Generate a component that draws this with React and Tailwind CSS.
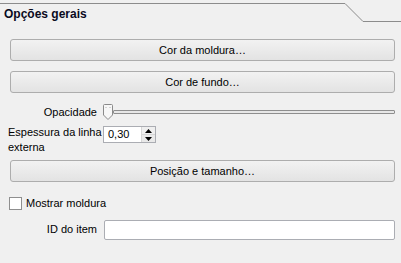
import React from "react";

function Btn({ children, className = "" }) {
  return (
    <div
      className={
        "flex h-[22px] items-center justify-center rounded-[3px] border border-[#adadad] bg-gradient-to-b from-[#f2f2f2] to-[#e3e3e3] text-[11px] text-black " +
        className
      }
    >
      {children}
    </div>
  );
}

export default function App() {
  return (
    <div
      className="relative h-[263px] w-[401px] overflow-hidden bg-[#f0f0f0] text-black"
      style={{ fontFamily: '"Liberation Sans", Arial, sans-serif' }}
    >
      <div className="relative h-[24px]">
        <svg className="absolute left-0 top-0" width="401" height="24">
          <path d="M0 3.5 H345 L363 21.5 H401" fill="none" stroke="#8c8c8c" strokeWidth="1" />
        </svg>
        <div className="relative pl-[4px] pt-[7px] text-[12px] font-bold leading-[14px] text-[#0a0a1e]">
          Opções gerais
        </div>
      </div>

      <div className="flex flex-col px-[10px] pr-[6px]">
        <Btn className="mt-[15px]">Cor da moldura…</Btn>
        <Btn className="mt-[10px]">Cor de fundo…</Btn>

        <div className="mt-[10px] flex h-[18px] items-center">
          <div className="w-[87px] text-right text-[11px]">Opacidade</div>
          <div className="ml-[6px] flex flex-1 items-center">
            <svg width="10" height="16" viewBox="0 0 10 16" className="shrink-0">
              <path
                d="M1.5 0.5 H8.5 Q9.5 0.5 9.5 1.5 V11 L5 15.5 L0.5 11 V1.5 Q0.5 0.5 1.5 0.5 Z"
                fill="#f7f7f7"
                stroke="#8a8a8a"
              />
              <path d="M3 3 V4 M7 3 V4" stroke="#b0b0b0" />
            </svg>
            <div className="h-[4px] flex-1 rounded-[1px] border border-[#8e8e8e] bg-[#e7e7e7]" />
          </div>
        </div>

        <div className="mt-[4px] flex items-start">
          <div className="ml-[-2px] w-[95px] text-[11px] leading-[15px]">
            Espessura da linha externa
          </div>
          <div className="mt-[1px] flex h-[17px] w-[53px] border border-[#abadb3] bg-white">
            <div className="flex flex-1 items-center pl-[4px] text-[11px]">0,30</div>
            <div className="flex w-[14px] flex-col border-l border-[#d6d6d6]">
              <div className="flex flex-1 items-center justify-center border-b border-[#d6d6d6] bg-[#efefef]">
                <svg width="7" height="4" viewBox="0 0 7 4">
                  <path d="M0 4 L3.5 0 L7 4 Z" fill="#000" />
                </svg>
              </div>
              <div className="flex flex-1 items-center justify-center bg-[#e9e9e9]">
                <svg width="7" height="4" viewBox="0 0 7 4">
                  <path d="M0 0 L3.5 4 L7 0 Z" fill="#000" />
                </svg>
              </div>
            </div>
          </div>
        </div>

        <Btn className="mt-[5px]">Posição e tamanho…</Btn>

        <div className="mt-[13px] flex items-center">
          <div className="ml-[-1px] h-[13px] w-[13px] border border-[#8f8f8f] bg-white" />
          <span className="ml-[4px] text-[11px]">Mostrar moldura</span>
        </div>

        <div className="mt-[8px] flex items-center">
          <div className="w-[87px] text-right text-[11px]">ID do item</div>
          <div className="ml-[7px] h-[20px] flex-1 rounded-[2px] border border-[#abadb3] bg-white" />
        </div>
      </div>
    </div>
  );
}
